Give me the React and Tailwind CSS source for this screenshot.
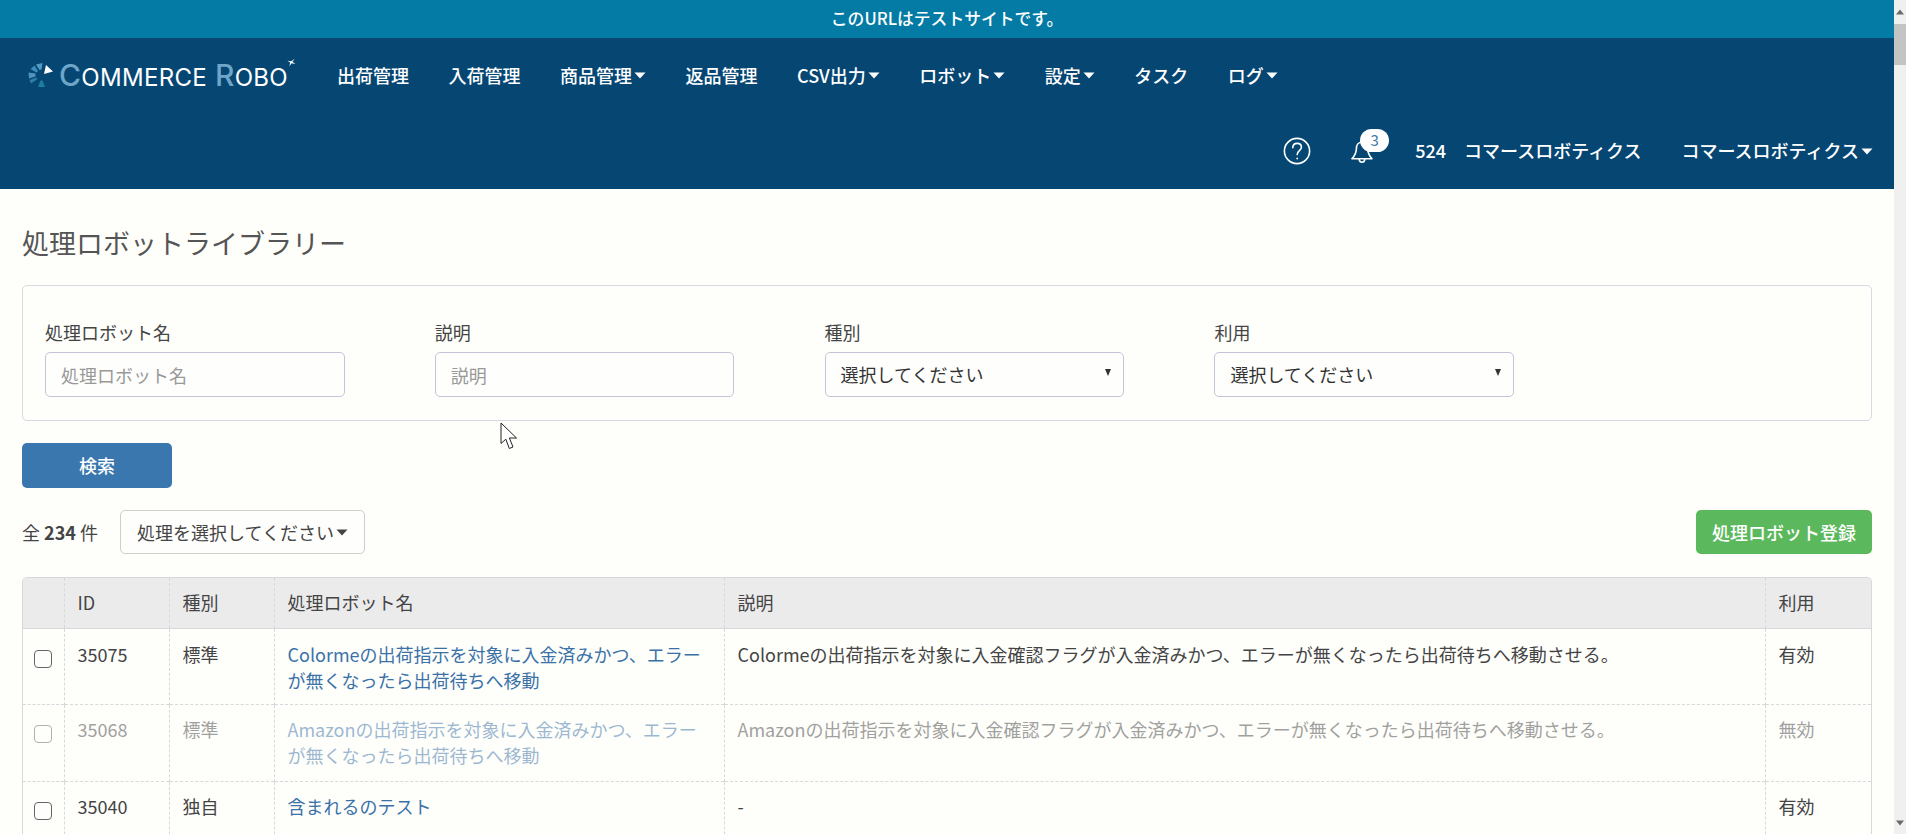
import React from "react";

const NAV = [
  ["出荷管理", false],
  ["入荷管理", false],
  ["商品管理", true],
  ["返品管理", false],
  ["CSV出力", true],
  ["ロボット", true],
  ["設定", true],
  ["タスク", false],
  ["ログ", true],
];

function Caret({ className = "" }) {
  return (
    <svg width="12" height="7" viewBox="0 0 12 7" className={className} aria-hidden="true">
      <path d="M0.5 0.5H11.5L6 6.5Z" fill="currentColor" />
    </svg>
  );
}

function LogoMark() {
  return (
    <svg width="26" height="26" viewBox="0 0 26 26" aria-hidden="true" className="shrink-0">
      <polygon points="8,2.5 14.5,1 13.5,7.5 11.5,8" fill="#4f9bc4" />
      <polygon points="2.5,7 6.5,3.5 10,9 8.5,10.5" fill="#3f8db8" />
      <polygon points="1,16.5 0.5,10.5 7.5,11.5 7.5,14.5" fill="#4f94bb" />
      <polygon points="3,21.5 1.5,18 8,15.5 9.5,17" fill="#2f7ea8" />
      <polygon points="10,25 12.5,18.5 14.5,18.5 17,25" fill="#1c7f9c" />
      <polygon points="18,3 25,9.5 16,12" fill="#ffffff" />
    </svg>
  );
}

function Logo() {
  return (
    <div className="flex items-center gap-[5px] text-white font-['Inter',sans-serif] font-normal leading-none">
      <LogoMark />
      <div className="flex items-baseline tracking-[0.3px] text-[24px] relative pr-[8px]">
        <span className="text-[30px] font-medium text-[#6ea6c9]">C</span>
        <span>OMMERCE</span>
        <span className="text-[30px] font-medium text-[#6ea6c9] ml-[8px]">R</span>
        <span>OBO</span>
        <svg width="9" height="9" viewBox="0 0 9 9" className="absolute right-0 top-[-2px]" aria-hidden="true">
          <path d="M7.8 0.8 5.4 3.7 8.4 6 4.6 5.2 2.4 8.2 3.2 4.6 0.4 2.8 4.2 3.2Z" fill="#ffffff" />
        </svg>
      </div>
    </div>
  );
}

function Field({ label, children }) {
  return (
    <div className="w-[299.5px] mr-[90.3px] shrink-0">
      <div className="text-[18px] leading-[26px] text-[#444] mb-[7px]">{label}</div>
      {children}
    </div>
  );
}

function TextInput({ placeholder }) {
  return (
    <input
      placeholder={placeholder}
      className="block w-full h-[45px] px-[15px] text-[18px] border border-[#c3c4d8] rounded-[5px] bg-[#fefefc] outline-none placeholder:text-[#999]"
    />
  );
}

function SelectBox() {
  return (
    <div className="relative h-[45px] w-full pl-[15px] flex items-center text-[18px] text-[#333] border border-[#c3c4d8] rounded-[5px] bg-[#fefefc]">
      <span>選択してください</span>
      <svg width="6" height="7" viewBox="0 0 6 7" className="absolute right-[12px] top-[16px]" aria-hidden="true">
        <path d="M0 0H6L3 7Z" fill="#333" />
      </svg>
    </div>
  );
}

const ROWS = [
  {
    id: "35075",
    kind: "標準",
    name: "Colormeの出荷指示を対象に入金済みかつ、エラーが無くなったら出荷待ちへ移動",
    desc: "Colormeの出荷指示を対象に入金確認フラグが入金済みかつ、エラーが無くなったら出荷待ちへ移動させる。",
    use: "有効",
    h: "h-[76px]",
    pt: "pt-[12px]",
    off: false,
  },
  {
    id: "35068",
    kind: "標準",
    name: "Amazonの出荷指示を対象に入金済みかつ、エラーが無くなったら出荷待ちへ移動",
    desc: "Amazonの出荷指示を対象に入金確認フラグが入金済みかつ、エラーが無くなったら出荷待ちへ移動させる。",
    use: "無効",
    h: "h-[77px]",
    pt: "pt-[11px]",
    off: true,
  },
  {
    id: "35040",
    kind: "独自",
    name: "含まれるのテスト",
    desc: "-",
    use: "有効",
    h: "h-[77px]",
    pt: "pt-[11px]",
    off: false,
  },
];

const th = "border-l border-dashed border-[#d6d8dc] first:border-l-0 px-[13px] text-left font-normal text-[18px] text-[#444]";
const td = "border-l border-dashed border-[#d6d8dc] first:border-l-0 px-[13px] pb-0 align-top text-[18px] leading-[26.4px]";

export default function App() {
  return (
    <div className="flex h-screen w-full overflow-hidden bg-[#fefefb] font-['Noto_Sans_CJK_JP','Noto_Sans',sans-serif] text-[#444]">
      <div className="flex-1 min-w-0">
        <div className="h-[38px] bg-[#047ba4] flex items-center justify-center text-white text-[16.8px] font-medium">
          このURLはテストサイトです。
        </div>
        <header className="h-[151px] bg-[#054673] text-white flex flex-col">
          <div className="h-[74px] flex items-center pl-[28px]">
            <Logo />
            <nav className="flex items-center gap-[39.5px] ml-[41px] text-[18px] font-medium">
              {NAV.map(([label, caret]) => (
                <span key={label} className="flex items-center">
                  {label}
                  {caret && <Caret className="ml-[2px] mt-[1px]" />}
                </span>
              ))}
            </nav>
          </div>
          <div className="flex-1 flex items-center justify-end pr-[21px] text-[18px] font-medium">
            <svg width="28" height="28" viewBox="0 0 28 28" fill="none" stroke="white" strokeWidth="1.6" strokeLinecap="round" aria-hidden="true">
              <circle cx="14" cy="14" r="12.6" />
              <path d="M9.8 10.8c0-2.7 1.9-4.4 4.4-4.4 2.4 0 4.2 1.6 4.2 3.8 0 3.4-4.2 3.6-4.2 7.4" />
              <path d="M14.2 21.2v.6" />
            </svg>
            <div className="relative ml-[39px] mr-[41px] w-[24px] h-[27px]">
              <svg width="24" height="24" viewBox="0 0 24 24" fill="none" stroke="white" strokeWidth="1.6" strokeLinejoin="round" className="absolute left-0 top-[3px]" aria-hidden="true">
                <path d="M12 2.2c-3.6 0-5.6 2.9-5.6 6.2 0 5-2 7.6-4.4 10.4h20c-2.4-2.8-4.4-5.4-4.4-10.4 0-3.3-2-6.2-5.6-6.2Z" />
                <path d="M9.2 19c0 2 1.2 3.2 2.8 3.2s2.8-1.2 2.8-3.2" />
              </svg>
              <span className="absolute left-[10px] top-[-8px] w-[29px] h-[23px] rounded-[12px] bg-white text-[#3f77a6] text-[15px] font-normal flex items-center justify-center">
                3
              </span>
            </div>
            <span>524</span>
            <span className="ml-[18px]">コマースロボティクス</span>
            <span className="ml-[40px]">コマースロボティクス</span>
            <Caret className="ml-[2px] mt-[1px]" />
          </div>
        </header>

        <main className="relative px-[22px] pt-[36px]">
          <h1 className="text-[27px] font-normal leading-[36px] text-[#555]">処理ロボットライブラリー</h1>

          <section className="mt-[24px] h-[136px] border border-[#d9d9e2] rounded-[5px] pt-[33px] pl-[22px] flex">
            <Field label="処理ロボット名">
              <TextInput placeholder="処理ロボット名" />
            </Field>
            <Field label="説明">
              <TextInput placeholder="説明" />
            </Field>
            <Field label="種別">
              <SelectBox />
            </Field>
            <Field label="利用">
              <SelectBox />
            </Field>
          </section>

          <button className="mt-[22px] block w-[150px] h-[45px] rounded-[5px] bg-[#3a77ae] text-white text-[18px] font-medium">
            検索
          </button>

          <div className="mt-[22px] flex items-center justify-between">
            <div className="flex items-center">
              <span className="text-[18px] text-[#444] w-[98px]">
                全 <b className="font-bold">234</b> 件
              </span>
              <button className="h-[44px] w-[245px] rounded-[5px] border border-[#cfcfc9] bg-[#fefefc] text-[18px] text-[#444] flex items-center justify-center">
                処理を選択してください
                <Caret className="ml-[2px] mt-[1px]" />
              </button>
            </div>
            <button className="h-[44px] w-[176px] rounded-[5px] bg-[#5cb85c] text-white text-[18px] font-medium">
              処理ロボット登録
            </button>
          </div>

          <div className="mt-[23px] border border-[#d6d8dc] border-b-0 rounded-t-[5px] overflow-hidden">
            <table className="w-full table-fixed border-collapse">
              <colgroup>
                <col className="w-[41px]" />
                <col className="w-[105px]" />
                <col className="w-[105px]" />
                <col className="w-[450px]" />
                <col />
                <col className="w-[106px]" />
              </colgroup>
              <thead>
                <tr className="h-[50px] bg-[#ebebec] border-b border-[#d6d8dc]">
                  <th className={th}></th>
                  <th className={th}>ID</th>
                  <th className={th}>種別</th>
                  <th className={th}>処理ロボット名</th>
                  <th className={th}>説明</th>
                  <th className={th}>利用</th>
                </tr>
              </thead>
              <tbody>
                {ROWS.map((r) => (
                  <tr key={r.id} className={`${r.h} border-b border-dashed border-[#d6d8dc]`}>
                    <td className={`${td} ${r.pt} !px-0 ${r.off ? "opacity-50" : ""}`}>
                      <div className="mx-auto mt-[9px] w-[18px] h-[18px] border-[1.5px] border-[#666] rounded-[4px] bg-[#fefefc]" />
                    </td>
                    <td className={`${td} ${r.pt} ${r.off ? "opacity-50" : ""}`}>{r.id}</td>
                    <td className={`${td} ${r.pt} ${r.off ? "opacity-50" : ""}`}>{r.kind}</td>
                    <td className={`${td} ${r.pt} ${r.off ? "opacity-50" : ""} text-[#3a72a8]`}>{r.name}</td>
                    <td className={`${td} ${r.pt} ${r.off ? "opacity-50" : ""}`}>{r.desc}</td>
                    <td className={`${td} ${r.pt} ${r.off ? "opacity-50" : ""}`}>{r.use}</td>
                  </tr>
                ))}
              </tbody>
            </table>
          </div>

          <svg width="19" height="28" viewBox="0 0 19 28" className="absolute left-[500px] top-[233px]" aria-hidden="true">
            <path d="M1 1V21.5L5.8 17.2L9.3 26.5L13 25L9.4 16H16.5Z" fill="#ffffff" stroke="#222" strokeWidth="1" strokeLinejoin="miter" />
          </svg>
        </main>
      </div>

      <div className="w-[12px] shrink-0 bg-[#f0f0f0] flex flex-col items-center">
        <svg width="8" height="6" viewBox="0 0 8 6" className="mt-[9px]" aria-hidden="true">
          <path d="M4 0.5L8 5.5H0Z" fill="#6a6a6a" />
        </svg>
        <div className="mt-[9px] w-full h-[41px] bg-[#c4c4c4]" />
        <div className="flex-1" />
        <svg width="8" height="6" viewBox="0 0 8 6" className="mb-[8px]" aria-hidden="true">
          <path d="M4 5.5L8 0.5H0Z" fill="#6a6a6a" />
        </svg>
      </div>
    </div>
  );
}
